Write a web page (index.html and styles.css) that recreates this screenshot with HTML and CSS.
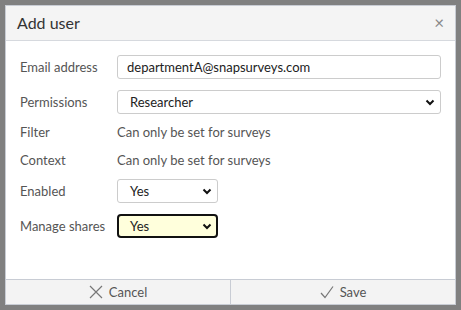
FILE: index.html
```html
<!DOCTYPE html>
<html lang="en">
<head>
    <meta charset="UTF-8">
    <title>Add user</title>
    <link rel="stylesheet" href="styles.css">
</head>
<body>
    <div class="dialog">
        <div class="dialog-header">
            <span class="dialog-title">Add user</span>
            <span class="dialog-close">&times;</span>
        </div>
        <div class="dialog-body">
            <div class="row">
                <label class="row-label">Email address</label>
                <input class="field field-wide" type="text" value="departmentA@snapsurveys.com">
            </div>
            <div class="row row-tight">
                <label class="row-label">Permissions</label>
                <div class="select field-wide">
                    <span>Researcher</span>
                    <svg class="chevron" width="10" height="7" viewBox="0 0 10 7"><path d="M1.5 1.5 L5 5 L8.5 1.5" fill="none" stroke="#111" stroke-width="2"/></svg>
                </div>
            </div>
            <div class="row row-text">
                <span class="row-label">Filter</span>
                <span class="row-value">Can only be set for surveys</span>
            </div>
            <div class="row row-text">
                <span class="row-label">Context</span>
                <span class="row-value">Can only be set for surveys</span>
            </div>
            <div class="row">
                <label class="row-label">Enabled</label>
                <div class="select field-small">
                    <span>Yes</span>
                    <svg class="chevron" width="10" height="7" viewBox="0 0 10 7"><path d="M1.5 1.5 L5 5 L8.5 1.5" fill="none" stroke="#111" stroke-width="2"/></svg>
                </div>
            </div>
            <div class="row">
                <label class="row-label">Manage shares</label>
                <div class="select field-small focused">
                    <span>Yes</span>
                    <svg class="chevron" width="10" height="7" viewBox="0 0 10 7"><path d="M1.5 1.5 L5 5 L8.5 1.5" fill="none" stroke="#111" stroke-width="2"/></svg>
                </div>
            </div>
        </div>
        <div class="dialog-footer">
            <button class="footer-btn">
                <svg width="14" height="14" viewBox="0 0 14 14"><path d="M1 1 L13 13 M13 1 L1 13" stroke="#777" stroke-width="1.2" fill="none"/></svg>
                Cancel
            </button>
            <button class="footer-btn">
                <svg width="14" height="14" viewBox="0 0 14 14"><path d="M1 8 L5 12.5 L13 1.5" stroke="#777" stroke-width="1.2" fill="none"/></svg>
                Save
            </button>
        </div>
    </div>
</body>
</html>
```

FILE: styles.css
```css
body {
    margin: 0;
    padding: 5px;
    background-color: #808080;
    font-family: 'Lato', 'Open Sans', sans-serif;
    font-size: 13px;
    color: #333;
}
.dialog {
    background-color: #fff;
    border: 1px solid #c8ccd4;
    height: 298px;
    display: flex;
    flex-direction: column;
}
.dialog-header {
    height: 32px;
    display: flex;
    align-items: center;
    justify-content: space-between;
    padding: 0 11px 2px 11px;
    background-color: #f4f4f4;
    border-bottom: 1px solid #d6d9de;
}
.dialog-title {
    font-size: 16px;
    color: #333;
}
.dialog-close {
    font-size: 17px;
    color: #888;
}
.dialog-body {
    flex: 1;
    padding: 14px 14px 0 14px;
}
.row {
    display: flex;
    align-items: center;
    height: 24px;
    margin-bottom: 11px;
}
.row-tight {
    margin-bottom: 9px;
}
.row-text {
    height: 17px;
}
.row-label {
    width: 97px;
    color: #555;
}
.row-value {
    color: #555;
}
.field {
    font-family: inherit;
    font-size: 13px;
    color: #222;
    box-sizing: border-box;
    height: 24px;
    padding: 0 9px;
    border: 1px solid #ccc;
    border-radius: 3px;
    outline: none;
}
.field-wide {
    width: 324px;
}
.field-small {
    width: 101px;
}
.select {
    box-sizing: border-box;
    height: 24px;
    display: flex;
    align-items: center;
    justify-content: space-between;
    padding: 0 5px 0 12px;
    border: 1px solid #ccc;
    border-radius: 3px;
    color: #222;
    background-color: #fff;
}
.focused {
    border: 2px solid #111;
    border-radius: 4px;
    background-color: #ffffdc;
    padding: 0 4px 0 11px;
}
.dialog-footer {
    display: flex;
    height: 24px;
    border-top: 1px solid #c8ccd4;
    background-color: #f3f3f3;
}
.footer-btn {
    flex: 1;
    display: flex;
    align-items: center;
    justify-content: center;
    gap: 6px;
    border: none;
    background: none;
    font-family: inherit;
    font-size: 13px;
    color: #555;
    padding: 0;
}
.footer-btn + .footer-btn {
    border-left: 1px solid #c8ccd4;
}
```
